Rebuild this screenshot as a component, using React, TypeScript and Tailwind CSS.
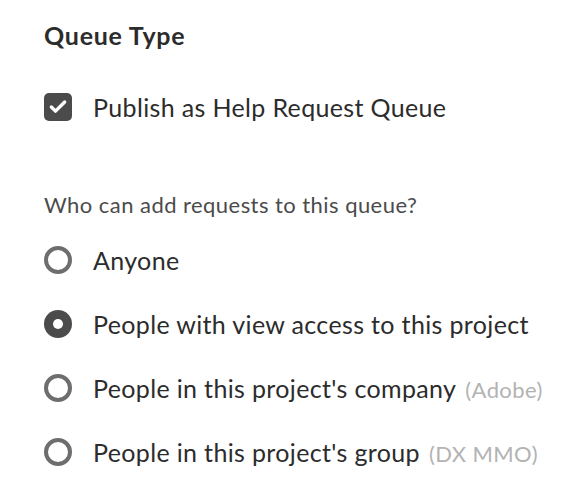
import { Check } from "lucide-react";

type Opt = { label: string; extra?: string; checked?: boolean };

const options: Opt[] = [
  { label: "Anyone" },
  { label: "People with view access to this project", checked: true },
  { label: "People in this project's company", extra: "(Adobe)" },
  { label: "People in this project's group", extra: "(DX MMO)" },
];

function Radio({ checked }: { checked?: boolean }) {
  if (checked)
    return (
      <span className="flex h-7 w-7 shrink-0 items-center justify-center rounded-full bg-[#4b4b4b]">
        <span className="h-2.5 w-2.5 rounded-full bg-white" />
      </span>
    );
  return <span className="h-7 w-7 shrink-0 rounded-full border-4 border-[#6e6e6e] bg-white" />;
}

export default function App() {
  return (
    <div className="min-h-[490px] w-[568px] bg-white pl-[44px] pt-[19px] text-[#2c2c2c]" style={{ fontFamily: "Lato, 'Open Sans', sans-serif" }}>
      <h2 className="text-[25px] font-bold leading-[32px] tracking-[0.75px]">Queue Type</h2>

      <label className="mt-[36px] flex h-10 items-center gap-[21px]">
        <span className="flex h-7 w-7 shrink-0 items-center justify-center rounded-[5px] bg-[#4b4b4b] text-white">
          <Check size={20} strokeWidth={4} />
        </span>
        <span className="text-[25px] leading-none tracking-[0.35px]">Publish as Help Request Queue</span>
      </label>

      <p className="mt-[64px] text-[22px] leading-[28px] tracking-[0.45px] text-[#4b4b4b]">Who can add requests to this queue?</p>

      <ul className="mt-[9px]">
        {options.map((o) => (
          <li key={o.label} className="flex h-16 items-center gap-[21px]">
            <Radio checked={o.checked} />
            <span className="text-[25px] leading-none tracking-[0.35px]">
              {o.label}
              {o.extra && <span className="ml-[9px] text-[22px] tracking-[0.4px] text-[#b3b3b3]">{o.extra}</span>}
            </span>
          </li>
        ))}
      </ul>
    </div>
  );
}
